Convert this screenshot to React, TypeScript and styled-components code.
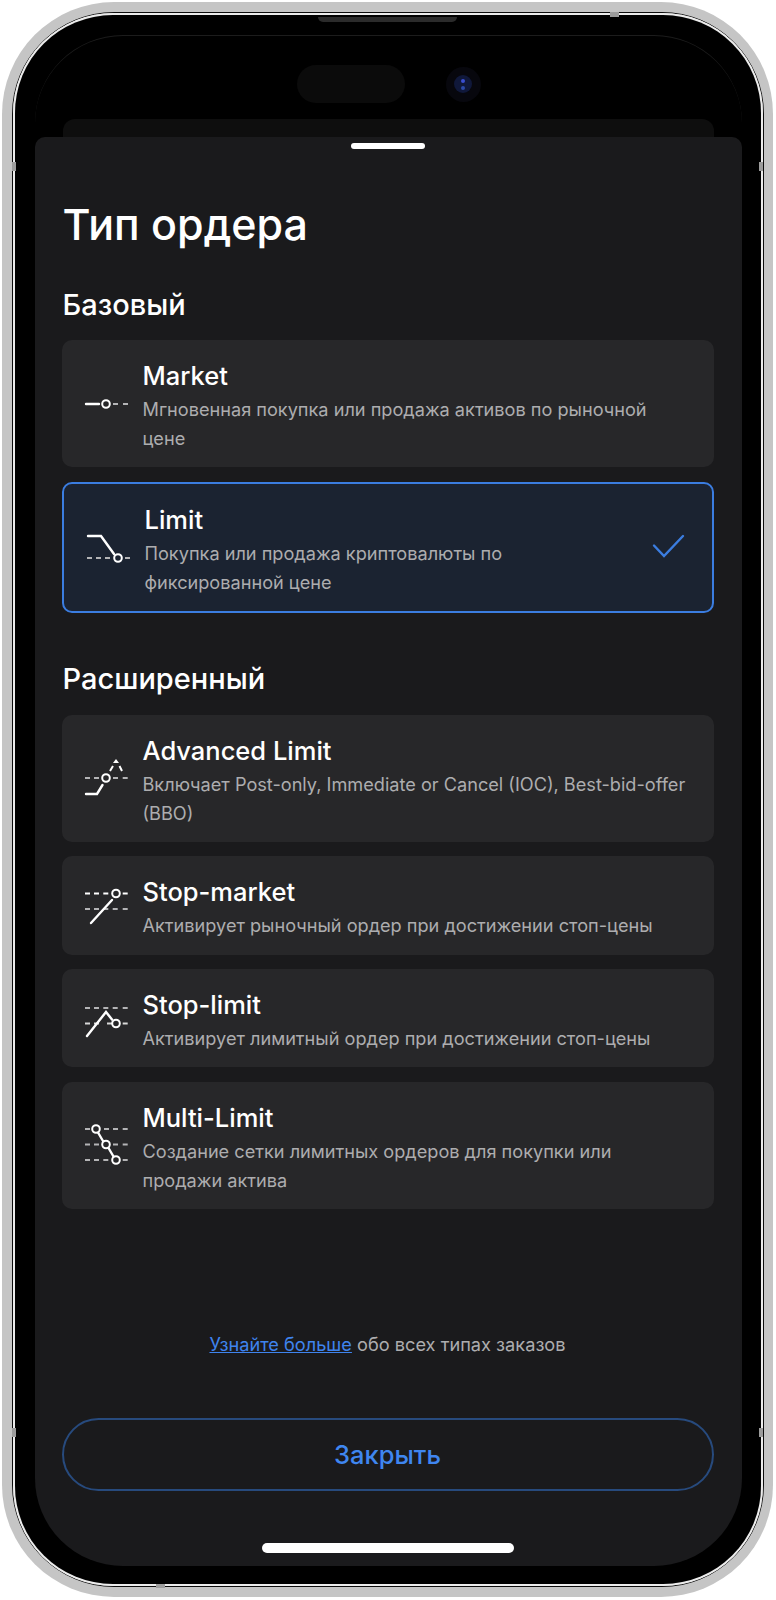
import React from 'react';
import styled, { createGlobalStyle } from 'styled-components';

const GlobalStyle = createGlobalStyle`
  * { box-sizing: border-box; }
  body { margin: 0; background: #fff; font-family: Inter, "Noto Sans", sans-serif; }
`;

const Page = styled.div` width: 776px; height: 1600px; padding: 2px 3px 3px 2px; display: flex; `;
const Phone = styled.div`
  position: relative; flex: 1; display: flex; background: #c5c5c5;
  border-radius: 112px; padding: 10px 9px 10px 10px;
`;
const RimDark = styled.div` flex: 1; display: flex; border: 1.5px solid #0c0c0c; border-radius: 102px; `;
const RimLight = styled.div` flex: 1; display: flex; border: 2px solid #ececec; border-radius: 100px; `;
const Bezel = styled.div`
  flex: 1; display: flex; background: #000; border-radius: 98px;
  padding: 19.5px 19.5px 18.5px 19.5px;
`;
const Screen = styled.div`
  flex: 1; display: flex; flex-direction: column; overflow: hidden;
  border-radius: 88px; border-top: 1px solid #1c1c1c; background: #000;
`;
const Antenna = styled.span<{ $x: number; $y: number; $w: number; $h: number }>`
  position: absolute; left: ${p => p.$x}px; top: ${p => p.$y}px;
  width: ${p => p.$w}px; height: ${p => p.$h}px; background: #9c9c9c;
`;
const Speaker = styled.span`
  position: absolute; left: 316px; top: 15px; width: 139px; height: 5px;
  background: #2b2b2b; border-radius: 0 0 5px 5px;
`;

const IslandRow = styled.div` height: 83px; display: flex; align-items: flex-start; padding: 29px 0 0 262px; gap: 41px; `;
const Pill = styled.div` width: 108px; height: 38px; border-radius: 19px; background: #0b0b0b; `;
const Camera = styled.div`
  width: 35px; height: 35px; margin-top: 2px; border-radius: 50%; background: #07070d;
  display: flex; align-items: center; justify-content: center;
`;
const Lens = styled.div`
  width: 18px; height: 18px; border-radius: 50%; background: #10183a;
  display: flex; flex-direction: column; align-items: center; justify-content: center; gap: 3px;
`;
const LensDot = styled.span<{ $c: string }>` width: 4px; height: 4px; border-radius: 50%; background: ${p => p.$c}; `;
const PeekCard = styled.div` height: 18px; margin: 0 28px; background: #0e0e0e; border-radius: 12px 12px 0 0; `;

const Sheet = styled.div`
  flex: 1; display: flex; flex-direction: column; background: #1a1a1c;
  border-radius: 10px 10px 0 0; padding: 6px 28px 12px 27px;
`;
const Handle = styled.div` align-self: center; width: 74px; height: 6px; border-radius: 3px; background: #fff; margin-left: 1px; `;
const Title = styled.h1`
  margin: 50px 0 0 1px; font-size: 43px; line-height: 50px; font-weight: 500; color: #fff;
`;
const SectionTitle = styled.h2<{ $top: number }>`
  margin: ${p => p.$top}px 0 18.5px 1px; font-size: 29px; line-height: 34px; font-weight: 500; color: #fff;
`;
const List = styled.div` display: flex; flex-direction: column; gap: 14.5px; `;
const Card = styled.div<{ $active?: boolean }>`
  display: flex; align-items: center; gap: 14px; padding: 20px 21px 14.25px 22px; border-radius: 10px;
  background: ${p => (p.$active ? '#1b2331' : '#272729')};
  ${p => p.$active && 'border: 2px solid #3b7de0;'}
`;
const IconBox = styled.svg` flex: none; width: 45px; height: 44px; margin-top: -6px; `;
const CardBody = styled.div` flex: 1; min-width: 0; `;
const CardTitle = styled.div` font-size: 25.5px; line-height: 32px; font-weight: 500; color: #fff; margin-bottom: 3px; `;
const CardText = styled.div` font-size: 18.15px; line-height: 29px; color: #adadaf; `;
const Check = styled.svg` flex: none; width: 34px; height: 26px; margin-right: 5px; margin-top: -6px; `;

const Footnote = styled.p` margin: 121px 0 0; text-align: center; font-size: 18.2px; line-height: 28px; color: #adadaf; `;
const FootLink = styled.a` color: #3f84ee; text-decoration: underline; `;
const CloseButton = styled.button`
  margin-top: 60px; height: 73px; border-radius: 37px; border: 2px solid #274a7d; background: transparent;
  font: 500 25.5px Inter, sans-serif; color: #3f86f0;
`;
const HomeBar = styled.div` align-self: center; width: 252px; height: 10px; border-radius: 5px; background: #fff; margin: 52px 0 0 1px; `;

const Solid = ({ d }: { d: string }) => (
  <path d={d} fill="none" stroke="#fff" strokeWidth={2.4} strokeLinecap="round" strokeLinejoin="miter" />
);
const Dash = ({ d }: { d: string }) => (
  <path d={d} fill="none" stroke="#b4b4b6" strokeWidth={2.2} />
);
const Ring = ({ x, y, bg = '#272729' }: { x: number; y: number; bg?: string }) => (
  <circle cx={x} cy={y} r={3.8} fill={bg} stroke="#fff" strokeWidth={2} />
);
// dashes along one row, each 5px long
const row = (y: number, xs: number[]) => xs.map(x => `M${x} ${y}h5`).join('');
const ALL = [1, 10, 19.3, 28.7, 38.7];

const MarketIcon = () => (
  <IconBox viewBox="0 0 45 44">
    <Dash d={row(22, [29, 39])} />
    <Solid d="M2 22H15" />
    <Ring x={22} y={22} />
  </IconBox>
);
const LimitIcon = () => (
  <IconBox viewBox="0 0 45 44">
    <Dash d={row(33, [1, 10, 19, 39])} />
    <Solid d="M2 11H15L28 29" />
    <Ring x={32} y={33} bg="#1b2331" />
  </IconBox>
);
const AdvancedIcon = () => (
  <IconBox viewBox="0 0 45 44">
    <Dash d={row(22, [1, 10, 29, 38.7])} />
    <Solid d="M2 38H13L18.5 29" />
    <Ring x={22} y={22} />
    <path d="M26 15l3-5M35.5 10l2.5 5" fill="none" stroke="#fff" strokeWidth={2} />
    <path d="M32 3l3 4h-6z" fill="#fff" />
  </IconBox>
);
const StopMarketIcon = () => (
  <IconBox viewBox="0 0 45 44">
    <path d={row(10.5, [1, 10, 19.3, 38.7])} fill="none" stroke="#fff" strokeWidth={2} />
    <Dash d={row(26, ALL)} />
    <Solid d="M28 17L7 40" />
    <Ring x={32} y={10.5} />
  </IconBox>
);
const StopLimitIcon = () => (
  <IconBox viewBox="0 0 45 44">
    <Dash d={row(12, ALL)} />
    <path d={row(27.5, [1, 10, 23, 38.7])} fill="none" stroke="#d8d8d8" strokeWidth={2} />
    <Solid d="M3 40L22 16L28 23.5" />
    <Ring x={32} y={27.5} />
  </IconBox>
);
const MultiLimitIcon = () => (
  <IconBox viewBox="0 0 45 44">
    <Dash d={row(6, [1, 20, 29, 38.7]) + row(21.5, [1, 10, 29, 38.7]) + row(37, [1, 10, 19.3, 38.7])} />
    <path d="M14 9.5L19 18M24.5 25L29.5 33.5" fill="none" stroke="#fff" strokeWidth={2.4} strokeLinecap="round" />
    <Ring x={12} y={6} />
    <Ring x={22} y={21.5} />
    <Ring x={32} y={37} />
  </IconBox>
);

type Order = { icon: React.ReactNode; title: string; text: React.ReactNode; active?: boolean };

const basic: Order[] = [
  { icon: <MarketIcon />, title: 'Market', text: 'Мгновенная покупка или продажа активов по рыночной цене' },
  { icon: <LimitIcon />, title: 'Limit', text: <>Покупка или продажа криптовалюты по<br />фиксированной цене</>, active: true },
];
const advanced: Order[] = [
  { icon: <AdvancedIcon />, title: 'Advanced Limit', text: 'Включает Post-only, Immediate or Cancel (IOC), Best-bid-offer (BBO)' },
  { icon: <StopMarketIcon />, title: 'Stop-market', text: 'Активирует рыночный ордер при достижении стоп-цены' },
  { icon: <StopLimitIcon />, title: 'Stop-limit', text: 'Активирует лимитный ордер при достижении стоп-цены' },
  { icon: <MultiLimitIcon />, title: 'Multi-Limit', text: 'Создание сетки лимитных ордеров для покупки или продажи актива' },
];

const OrderCard = ({ icon, title, text, active }: Order) => (
  <Card $active={active}>
    {icon}
    <CardBody>
      <CardTitle>{title}</CardTitle>
      <CardText>{text}</CardText>
    </CardBody>
    {active && (
      <Check viewBox="0 0 34 26">
        <path d="M2 11.5L12 22L31 2" fill="none" stroke="#3b7de0" strokeWidth={2.4} strokeLinecap="round" />
      </Check>
    )}
  </Card>
);

export default function App() {
  return (
    <Page>
      <GlobalStyle />
      <Phone>
        <RimDark>
          <RimLight>
            <Bezel>
              <Screen>
                <IslandRow>
                  <Pill />
                  <Camera>
                    <Lens>
                      <LensDot $c="#3a4fd0" />
                      <LensDot $c="#2c4aa8" />
                    </Lens>
                  </Camera>
                </IslandRow>
                <PeekCard />
                <Sheet>
                  <Handle />
                  <Title>Тип ордера</Title>
                  <SectionTitle $top={39}>Базовый</SectionTitle>
                  <List>
                    {basic.map(o => <OrderCard key={o.title} {...o} />)}
                  </List>
                  <SectionTitle $top={49}>Расширенный</SectionTitle>
                  <List>
                    {advanced.map(o => <OrderCard key={o.title} {...o} />)}
                  </List>
                  <Footnote><FootLink>Узнайте больше</FootLink> обо всех типах заказов</Footnote>
                  <CloseButton>Закрыть</CloseButton>
                  <HomeBar />
                </Sheet>
              </Screen>
            </Bezel>
          </RimLight>
        </RimDark>
        <Speaker />
        <Antenna $x={608} $y={10} $w={9} $h={5} />
        <Antenna $x={10} $y={160} $w={4} $h={9} />
        <Antenna $x={757} $y={160} $w={4} $h={9} />
        <Antenna $x={10} $y={1426} $w={4} $h={9} />
        <Antenna $x={757} $y={1426} $w={4} $h={9} />
        <Antenna $x={154} $y={1582} $w={9} $h={4} />
      </Phone>
    </Page>
  );
}
